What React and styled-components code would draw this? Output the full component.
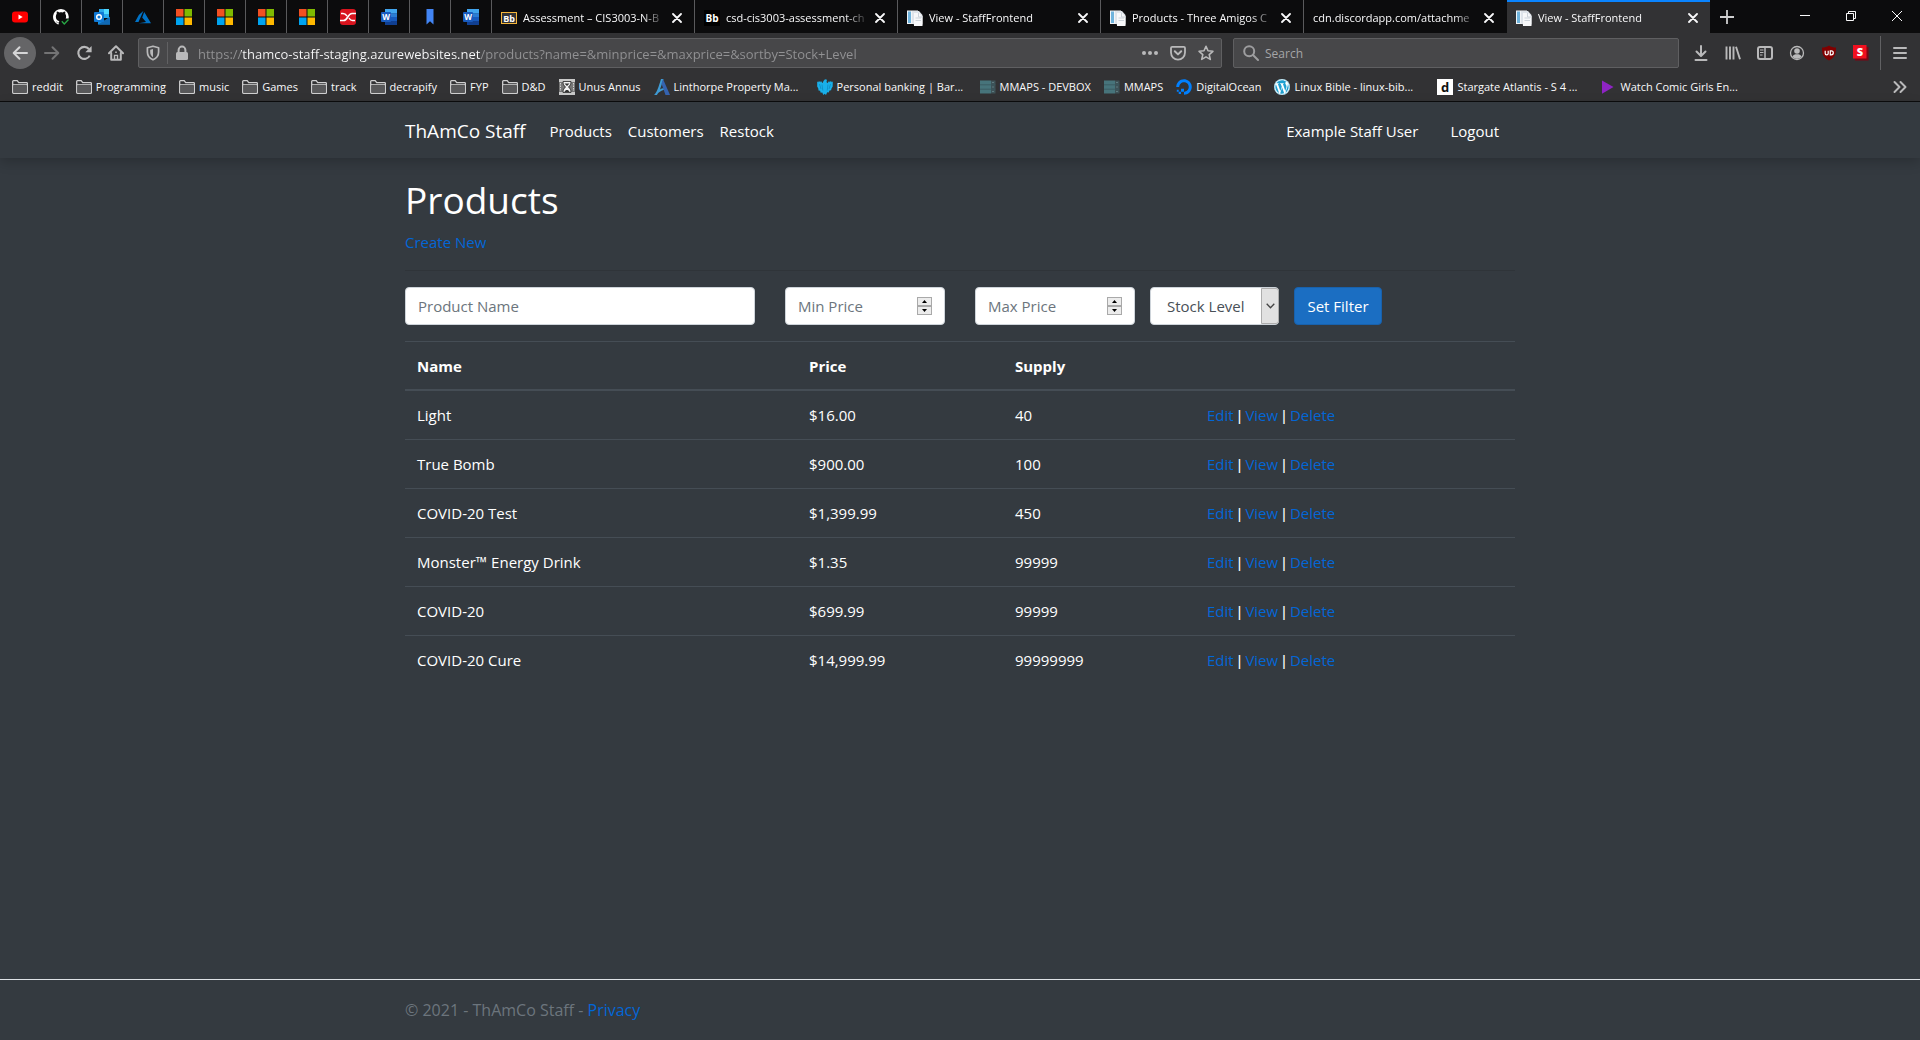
import React from "react";
import styled, { createGlobalStyle, css } from "styled-components";
import { FaWordpress, FaDigitalOcean } from "react-icons/fa";

const UI_FONT = `"Segoe UI", "Open Sans", "Noto Sans", sans-serif`;

const GlobalStyle = createGlobalStyle`
  *, *::before, *::after { box-sizing: border-box; }
  body {
    margin: 0;
    background: #343a40;
    color: #fff;
    font-family: ${UI_FONT};
    font-size: 15px;
    line-height: 24px;
  }
  button, input, select { font: inherit; color: inherit; margin: 0; }
  a { text-decoration: none; }
`;

/* ---------- browser icons ---------- */

const Svg = styled.svg`
  display: block;
  flex: none;
  width: ${(p) => p.$w || 16}px;
  height: ${(p) => p.$h || 16}px;
`;
const Icon = ({ children, w, h, box = "0 0 16 16", ...rest }) => (
  <Svg viewBox={box} $w={w} $h={h} fill="none" aria-hidden="true" {...rest}>
    {children}
  </Svg>
);
const line = { stroke: "currentColor", strokeWidth: 2, strokeLinecap: "round", strokeLinejoin: "round" };
const glyph = { fontFamily: "Open Sans, sans-serif", fontWeight: 700, textAnchor: "middle" };

const BackIcon = () => (
  <Icon><path d="M15 8H2M7.5 2.2 1.7 8l5.8 5.8" {...line} /></Icon>
);
const ForwardIcon = () => (
  <Icon><path d="M1 8h13M8.5 2.2 14.3 8l-5.8 5.8" {...line} /></Icon>
);
const ReloadIcon = () => (
  <Icon>
    <path d="M13.7 10.6A6 6 0 1 1 12.900 4" {...line} strokeWidth="2.1" strokeLinecap="butt" />
    <path d="M15.600 1v6.300H9.300z" fill="currentColor" />
  </Icon>
);
const HomeIcon = () => (
  <Icon>
    <path d="M1 8.2 8 1.3l7 6.9" {...line} />
    <path d="M3.2 8v6.8h9.6V8" {...line} />
    <path d="M6.5 15v-4.6h3V15" stroke="currentColor" strokeWidth="1.4" />
    <path d="M7.2 6.4h1.6v1.6H7.2z" fill="currentColor" />
  </Icon>
);
const ShieldIcon = () => (
  <Icon>
    <path d="M8 1.2 13.6 2.7V7c0 4-2.3 6.4-5.6 7.8C4.7 13.4 2.4 11 2.4 7V2.7z" stroke="currentColor" strokeWidth="1.7" strokeLinejoin="round" />
    <path d="M8 4v8.2C6.200 11 5.200 9.500 5.200 7V4.700z" fill="currentColor" />
  </Icon>
);
const LockIcon = () => (
  <Icon>
    <rect x="2" y="7" width="12" height="8" rx="1.5" fill="currentColor" />
    <path d="M4.600 7.500V5a3.400 3.400 0 0 1 6.800 0v2.500" stroke="currentColor" strokeWidth="2" />
  </Icon>
);
const DotsIcon = () => (
  <Icon>
    <circle cx="2" cy="8" r="2" fill="currentColor" />
    <circle cx="8" cy="8" r="2" fill="currentColor" />
    <circle cx="14" cy="8" r="2" fill="currentColor" />
  </Icon>
);
const PocketIcon = () => (
  <Icon>
    <path d="M2.200 1.800h11.600c.7 0 1.200.5 1.200 1.200v4.600a7 7 0 0 1-14 0V3c0-.7.5-1.200 1.200-1.200z" stroke="currentColor" strokeWidth="1.800" />
    <path d="M4.800 6.300 8 9.400l3.200-3.100" {...line} />
  </Icon>
);
const StarIcon = () => (
  <Icon>
    <path d="m8 1.300 2 4.500 4.900.5-3.700 3.300 1.100 4.800L8 11.900l-4.300 2.500 1.100-4.800L1.100 6.300 6 5.800z" stroke="currentColor" strokeWidth="1.600" strokeLinejoin="round" />
  </Icon>
);
const SearchIcon = () => (
  <Icon>
    <circle cx="6.200" cy="6.200" r="5" stroke="currentColor" strokeWidth="2" />
    <path d="m10 10 5 5" {...line} />
  </Icon>
);
const DownloadIcon = () => (
  <Icon><path d="M8 1v9.500M3.500 6.500 8 11l4.500-4.500M2.500 15h11" {...line} /></Icon>
);
const LibraryIcon = () => (
  <Icon>
    <path d="M1.500 1.500v13M5 1.500v13M8.500 1.500v13M11 1.800l4 12.400" stroke="currentColor" strokeWidth="1.900" />
  </Icon>
);
const SidebarIcon = () => (
  <Icon>
    <rect x="1" y="2" width="14" height="12" rx="2" stroke="currentColor" strokeWidth="2" />
    <path d="M8 2v12" stroke="currentColor" strokeWidth="1.500" />
    <path d="M3 5h3.500M3 7.500h3.500M3 10h2.500" stroke="currentColor" />
  </Icon>
);
const AccountIcon = () => (
  <Icon>
    <circle cx="8" cy="8" r="6.500" stroke="currentColor" strokeWidth="1.300" />
    <circle cx="8" cy="6" r="2.800" fill="currentColor" />
    <path d="M3.300 11.500c1-1.900 2.500-2.300 4.700-2.300s3.700.4 4.700 2.300A5.600 5.600 0 0 1 8 13.700a5.600 5.600 0 0 1-4.700-2.200z" fill="currentColor" />
  </Icon>
);
const UblockIcon = () => (
  <Icon>
    <path d="M8 .5C10 2 12.500 2.500 15 2.500c0 6.500-.7 9.500-7 13C1.700 12 1 9 1 2.500 3.500 2.500 6 2 8 .5z" fill="#800000" />
    <path d="M4.200 5.800v2.700c0 1 .5 1.300 1.500 1.300s1.500-.3 1.500-1.300V5.800" stroke="#fff" strokeWidth="1.200" />
    <path d="M9.300 5.900h1c1.500 0 2 .7 2 1.900s-.5 2-2 2h-1z" stroke="#fff" strokeWidth="1.200" />
  </Icon>
);
const StylishIcon = () => (
  <Icon>
    <path d="M2 2h13.500v13.500H2z" fill="#7c0512" />
    <path d="M0 0h13.500v13.500H0z" fill="#f0101f" />
    <text x="7" y="11" fontSize="11" fill="#fff" {...glyph} fontWeight="800">S</text>
  </Icon>
);
const MenuIcon = () => (
  <Icon><path d="M2 3h12M2 8h12M2 13h12" {...line} /></Icon>
);
const CloseIcon = () => (
  <Icon w={10} h={10} box="0 0 10 10">
    <path d="m1 1 8 8M9 1 1 9" {...line} strokeWidth="1.800" />
  </Icon>
);
const PlusIcon = () => (
  <Icon w={14} h={14} box="0 0 14 14"><path d="M7 0v14M0 7h14" stroke="currentColor" strokeWidth="1.800" /></Icon>
);
const MinimiseIcon = () => (
  <Icon w={10} h={10} box="0 0 10 10"><path d="M0 4.500h10" stroke="currentColor" /></Icon>
);
const RestoreIcon = () => (
  <Icon w={10} h={10} box="0 0 10 10">
    <path d="M.5 2.500h7v7h-7zM2.500 2.500v-2h7v7h-2" stroke="currentColor" />
  </Icon>
);
const WindowCloseIcon = () => (
  <Icon w={10} h={10} box="0 0 10 10"><path d="m0 0 10 10M10 0 0 10" stroke="currentColor" /></Icon>
);
const OverflowIcon = () => (
  <Icon><path d="m2.500 3 5 5-5 5M8.500 3l5 5-5 5" {...line} /></Icon>
);
const FolderIcon = () => (
  <Icon>
    <path d="M.7 13.500v-11c0-.5.3-.8.800-.8h3.700l1.500 2h8c.4 0 .7.300.7.700v9.100c0 .5-.3.800-.8.800H1.500c-.5 0-.8-.3-.8-.8z" stroke="#cfcfd0" strokeWidth="1.300" />
    <path d="M1 5.700h14" stroke="#cfcfd0" />
    <path d="M1.500 6.300h13v7.300h-13z" fill="#58585a" />
  </Icon>
);

/* ---------- site icons ---------- */

const YouTube = () => (
  <Icon>
    <rect x="0" y="2.500" width="16" height="11" rx="3" fill="#f00" />
    <path d="M6.500 5.500v5L10.700 8z" fill="#fff" />
  </Icon>
);
const GitHub = () => (
  <Icon>
    <path d="M8 0a8 8 0 0 0-3 15.400c.5.100.700-.2.700-.5v-1.500c-2.200.5-2.700-1-2.700-1 1.200.2 1.600 1.300 2.900.8.100-.5.300-.8.500-1C3.500 11.600 2.700 9.500 2.900 7c.1-1 .4-1.600.9-2.200-.2-.7-.2-1.500.1-2.300.9 0 1.700.5 2.300.9 1.200-.3 2.500-.3 3.600 0 .6-.4 1.400-.9 2.300-.9.300.8.300 1.600.1 2.300.6.700.9 1.500.9 2.500 0 .8-.1 1.500-.4 2.200h2.900A8 8 0 0 0 8 0z" fill="#fff" />
    <path d="m8.800 12.300 2.500 2.700 4.200-4.500" stroke="#28a745" strokeWidth="1.300" />
  </Icon>
);
const Outlook = () => (
  <Icon>
    <path d="M5 0h10v9H5z" fill="#28a8ea" />
    <path d="M10 0h5v5h-5z" fill="#50d9ff" />
    <path d="M5 5h5v5H5z" fill="#0364b8" />
    <path d="M4 8.500 10 12l6-4v7.500H4z" fill="#1490df" />
    <path d="M4 15.500 16 8v7.500z" fill="#1069b5" />
    <rect x="0" y="3" width="10" height="10" rx="1" fill="#0f78d4" />
    <circle cx="5" cy="8" r="2.300" stroke="#fff" strokeWidth="1.500" />
  </Icon>
);
const Azure = () => (
  <Icon>
    <path d="M8.500 1.800 3.800 5.900 0 13h3.500z" fill="#0072c6" />
    <path d="m9.200 2.900-2 5.500 3.800 4.700-7.300 1.200H16z" fill="#0072c6" />
  </Icon>
);
const Microsoft = () => (
  <Icon>
    <path d="M0 0h7.500v7.500H0z" fill="#f25022" />
    <path d="M8.500 0H16v7.500H8.500z" fill="#7fba00" />
    <path d="M0 8.500h7.500V16H0z" fill="#00a4ef" />
    <path d="M8.500 8.500H16V16H8.500z" fill="#ffb900" />
  </Icon>
);
const RedWave = () => (
  <Icon>
    <rect width="16" height="16" rx="3" fill="#d9141e" />
    <path d="M0 11.500h3.500C8 11.500 7.500 4.500 12 4.500h4" stroke="#fff" strokeWidth="1.600" />
    <path d="M1 4.500h2c2 0 3 1 4 2.500M9 9c1 1.500 1.500 2.500 3.500 2.500H15" stroke="#fff" strokeWidth="1.400" />
  </Icon>
);
const Word = () => (
  <Icon>
    <path d="M4 0h12v4.500H4z" fill="#41a5ee" />
    <path d="M4 4.200h12V8H4z" fill="#2b7cd3" />
    <path d="M4 8h12v4H4z" fill="#185abd" />
    <path d="M4 12h12v4H4z" fill="#103f91" />
    <rect x="0" y="3" width="10" height="10" rx="1" fill="#185abd" />
    <text x="5" y="11" fontSize="8" fill="#fff" {...glyph}>W</text>
  </Icon>
);
const Bookmark = () => (
  <Icon><path d="M4.500 0h7v15.500L8 12.300l-3.500 3.200z" fill="#4285f4" /></Icon>
);
const BlackboardGold = () => (
  <Icon>
    <rect x=".5" y="2.500" width="15" height="11" fill="#333" stroke="#f5b63a" />
    <text x="8" y="11.500" fontSize="9" fill="#fff" {...glyph}>Bb</text>
  </Icon>
);
const Blackboard = () => (
  <Icon>
    <path d="M0 0h16v16H0z" fill="#000" />
    <text x="8" y="12" fontSize="10" fill="#fff" {...glyph}>Bb</text>
  </Icon>
);
const Documents = () => (
  <Icon>
    <path d="M0 .5h11V14H0z" fill="#f2f5f8" />
    <path d="M1 1.500h3v11.500H1z" fill="#6fb3dc" />
    <path d="M5 1h7l3.500 4v9.500H7L5 13z" fill="#dfe4ea" />
    <path d="M7 3h5l3.500 3.500V16H7z" fill="#f7f8fa" />
    <path d="M8.500 8H14M8.500 10.500H14M11.500 3v4h4" stroke="#ccd3da" />
  </Icon>
);
const Hourglass = () => (
  <Icon>
    <path d="M0 0h16v3H0zM0 13h16v3H0z" fill="#c9c9c9" />
    <path d="M0 3h4l2 5-2 5H0zM16 3h-4l-2 5 2 5h4z" fill="#777" />
    <path d="M1.500 4v8M14.500 4v8" stroke="#d5d5d5" strokeDasharray="1.500 1" />
    <path d="M4 2.500h8c0 3-1 4-2.500 5.500C11 9.500 12 10.500 12 13.500H4C4 10.500 5 9.500 6.500 8 5 6.500 4 5.500 4 2.500z" fill="#f2f2f2" stroke="#222" strokeWidth=".8" />
    <path d="M5.500 4.500h5L8 7zM5.500 13c.5-1.500 1.500-2 2.500-2s2 .5 2.500 2z" fill="#333" />
  </Icon>
);
const Linthorpe = () => (
  <Icon>
    <path d="M0 16C3 13.500 4.500 8 7 0h2.500L6 10.500c2-1.300 4-1.500 5.500-.5C8 11.500 4 13 3 16z" fill="#3f9bd4" />
    <path d="M9 0 16 16h-4.500L7.500 4.500z" fill="#3563b0" />
  </Icon>
);
const Eagle = () => (
  <Icon>
    <path d="M6.500 2 8 .3l2 .5L9.500 3l1 1.200L12 2l.8 1.200L14 1.700l.6 1.600 1.200-.8-.1 5-1.200 2-.4 1.800-1.600.2-.8 2-1.500-.2L9 16l-1.300-1.300L6.300 16l-1-2.500-1.600.2-.6-2-1.600-.3-.2-1.900L.2 7.500l0-5 1.200.8.500-1.600 1.200 1.500L4 2l1.500 2.200z" fill="#19b0ea" />
    <path d="m2.500 5 1.500 5M5 5.500l.8 6M13.500 5 12 10M11 5.500l-.8 6" stroke="#0b84bb" strokeWidth=".7" />
  </Icon>
);
const ServerRack = () => (
  <Icon>
    <path d="M0 1.500h11v13H0z" fill="#47747b" />
    <path d="M11 1.500h4.500v13H11z" fill="#3e5257" />
    <path d="M0 5.800h15.500M0 10.200h15.500" stroke="#39575d" strokeWidth=".8" />
    <path d="M12.500 3.500h1M12.500 8h1M12.500 12.500h1" stroke="#7fa5ab" />
  </Icon>
);
const DailyD = () => (
  <Icon>
    <path d="M0 0h16v16H0z" fill="#fff" />
    <text x="8" y="13" fontSize="13" fill="#111" {...glyph}>d</text>
  </Icon>
);
const PlayTriangle = () => (
  <Icon><path d="M2 1.500 13.500 8 2 14.700z" fill="#8e24c4" /></Icon>
);
const BrandGlyph = styled.span`
  display: flex;
  flex: none;
  border-radius: 50%;
  color: ${(p) => p.$color};
  background: ${(p) => p.$bg || "transparent"};
`;
const Ocean = () => <BrandGlyph $color="#0080ff"><FaDigitalOcean size={16} /></BrandGlyph>;
const WordPress = () => <BrandGlyph $color="#1e9fd0" $bg="#fff"><FaWordpress size={16} /></BrandGlyph>;

/* ---------- browser chrome ---------- */

const BareButton = styled.button`
  display: flex;
  align-items: center;
  justify-content: center;
  padding: 0;
  border: 0;
  background: none;
`;

const Browser = styled.header`
  background: #323234;
  color: #f9f9fa;
  font-size: 11px;
  line-height: 16px;
  border-bottom: 1px solid #0c0c0d;
`;

const TabStrip = styled.div`
  display: flex;
  height: 33px;
  background: #0c0c0d;
`;

const PinnedTab = styled(BareButton)`
  flex: 0 0 41px;
  border-right: 1px solid #5a5a5c;
`;

const Tab = styled.div`
  display: flex;
  align-items: center;
  gap: 6px;
  flex: 0 1 203px;
  min-width: 0;
  padding: 2px 12px 0 9px;
  border-right: 1px solid ${(p) => (p.$last ? "transparent" : "#5a5a5c")};
  ${(p) => p.$active && css`
    background: #323234;
    border-right: 0;
    box-shadow: inset 0 2px #0a84ff;
  `}
`;

const TabTitle = styled(BareButton)`
  flex: 1;
  min-width: 0;
  justify-content: flex-start;
  white-space: nowrap;
  mask-image: linear-gradient(to left, transparent, #000 24px);
`;

const NewTab = styled(BareButton)`
  width: 34px;
  color: #cfcfd0;
`;

const WindowControls = styled.div`
  display: flex;
  margin-left: auto;
`;

const WindowButton = styled(BareButton)`
  width: 46px;
  height: 31px;
`;

const Toolbar = styled.div`
  display: flex;
  align-items: center;
  height: 40px;
  padding: 0 4px;
  color: #b9b9ba;
`;

const ToolButton = styled(BareButton)`
  flex: none;
  width: 32px;
  height: 32px;
  color: ${(p) => (p.$faded ? "#737374" : "inherit")};
`;

const BackButton = styled(ToolButton)`
  border-radius: 50%;
  background: #656567;
  color: #d6d6d7;
`;

const Field = styled.label`
  display: flex;
  align-items: center;
  height: 30px;
  border: 1px solid #5f5f61;
  border-radius: 2px;
  background: #474749;
  min-width: 0;
`;

const UrlBar = styled(Field)`
  flex: 1 1 1084px;
  margin-left: 6px;
  padding: 0 1px 0 6px;
`;

const SearchBar = styled(Field)`
  flex: 0 1 446px;
  margin: 0 6px 0 11px;
  padding-left: 9px;
  gap: 6px;
  color: #9d9d9f;
`;

const UrlInput = styled.input`
  flex: 1;
  min-width: 0;
  margin-left: 8px;
  padding: 2px 0 0;
  border: 0;
  outline: 0;
  font-size: 13px;
  line-height: 24px;
  color: #f9f9fa;
  background: linear-gradient(to right, #929294 43px, #f9f9fa 43px, #f9f9fa 283px, #929294 283px);
  background-clip: text;
  -webkit-text-fill-color: transparent;
`;

const SearchInput = styled.input`
  flex: 1;
  min-width: 0;
  padding: 2px 0 0;
  border: 0;
  outline: 0;
  background: none;
  font-size: 12px;
  line-height: 24px;
  &::placeholder { color: #a5a5a7; opacity: 1; }
`;

const Divider = styled.span`
  flex: none;
  width: 1px;
  height: ${(p) => p.$h}px;
  margin: 0 ${(p) => p.$gap}px;
  background: #616163;
`;

const UrlAction = styled(BareButton)`
  flex: none;
  width: 28px;
  height: 28px;
`;

const BookmarkBar = styled.nav`
  display: flex;
  align-items: center;
  gap: 13px;
  height: 28px;
  padding: 0 12px;
`;

const BookmarkLink = styled.a`
  display: flex;
  align-items: center;
  gap: 4px;
  flex: none;
  width: ${(p) => (p.$capped ? "150px" : "auto")};
  color: inherit;
  white-space: nowrap;
`;

const Overflow = styled(BareButton)`
  margin-left: auto;
  color: #b9b9ba;
`;

const pinned = [
  ["YouTube", YouTube], ["GitHub", GitHub], ["Outlook", Outlook], ["Azure", Azure],
  ["Microsoft", Microsoft], ["Microsoft", Microsoft], ["Microsoft", Microsoft], ["Microsoft", Microsoft],
  ["Wave", RedWave], ["Word", Word], ["Bookmark", Bookmark], ["Word", Word],
];

const tabs = [
  { title: "Assessment – CIS3003-N-B", Mark: BlackboardGold },
  { title: "csd-cis3003-assessment-ch", Mark: Blackboard },
  { title: "View - StaffFrontend", Mark: Documents },
  { title: "Products - Three Amigos C", Mark: Documents },
  { title: "cdn.discordapp.com/attachme" },
  { title: "View - StaffFrontend", Mark: Documents, active: true },
];

const bookmarks = [
  ["reddit", FolderIcon], ["Programming", FolderIcon], ["music", FolderIcon], ["Games", FolderIcon],
  ["track", FolderIcon], ["decrapify", FolderIcon], ["FYP", FolderIcon], ["D&D", FolderIcon],
  ["Unus Annus", Hourglass], ["Linthorpe Property Ma...", Linthorpe], ["Personal banking | Bar...", Eagle],
  ["MMAPS - DEVBOX", ServerRack], ["MMAPS", ServerRack], ["DigitalOcean", Ocean],
  ["Linux Bible - linux-bib...", WordPress], ["Stargate Atlantis - S 4 ...", DailyD],
  ["Watch Comic Girls En...", PlayTriangle],
];

function BrowserChrome() {
  return (
    <Browser>
      <TabStrip>
        {pinned.map(([name, Mark], i) => (
          <PinnedTab key={i} aria-label={name}><Mark /></PinnedTab>
        ))}
        {tabs.map(({ title, Mark, active }, i) => (
          <Tab key={i} $active={active} $last={i === tabs.length - 2}>
            {Mark && <Mark />}
            <TabTitle>{title}</TabTitle>
            <BareButton aria-label="Close tab"><CloseIcon /></BareButton>
          </Tab>
        ))}
        <NewTab aria-label="New tab"><PlusIcon /></NewTab>
        <WindowControls>
          <WindowButton aria-label="Minimise"><MinimiseIcon /></WindowButton>
          <WindowButton aria-label="Restore"><RestoreIcon /></WindowButton>
          <WindowButton aria-label="Close"><WindowCloseIcon /></WindowButton>
        </WindowControls>
      </TabStrip>
      <Toolbar>
        <BackButton aria-label="Back"><BackIcon /></BackButton>
        <ToolButton aria-label="Forward" $faded><ForwardIcon /></ToolButton>
        <ToolButton aria-label="Reload"><ReloadIcon /></ToolButton>
        <ToolButton aria-label="Home"><HomeIcon /></ToolButton>
        <UrlBar>
          <ShieldIcon />
          <Divider $h={22} $gap={6} />
          <LockIcon />
          <UrlInput
            aria-label="Address"
            defaultValue="https://thamco-staff-staging.azurewebsites.net/products?name=&minprice=&maxprice=&sortby=Stock+Level"
          />
          <UrlAction aria-label="Page actions"><DotsIcon /></UrlAction>
          <UrlAction aria-label="Save to Pocket"><PocketIcon /></UrlAction>
          <UrlAction aria-label="Bookmark page"><StarIcon /></UrlAction>
        </UrlBar>
        <SearchBar>
          <SearchIcon />
          <SearchInput aria-label="Search" placeholder="Search" />
        </SearchBar>
        <ToolButton aria-label="Downloads"><DownloadIcon /></ToolButton>
        <ToolButton aria-label="Library"><LibraryIcon /></ToolButton>
        <ToolButton aria-label="Sidebars"><SidebarIcon /></ToolButton>
        <ToolButton aria-label="Account"><AccountIcon /></ToolButton>
        <ToolButton aria-label="Blocker"><UblockIcon /></ToolButton>
        <ToolButton aria-label="Styles"><StylishIcon /></ToolButton>
        <Divider $h={34} $gap={3} />
        <ToolButton aria-label="Menu"><MenuIcon /></ToolButton>
      </Toolbar>
      <BookmarkBar>
        {bookmarks.map(([name, Mark]) => (
          <BookmarkLink key={name} href="#" $capped={name.endsWith("...")}><Mark />{name}</BookmarkLink>
        ))}
        <Overflow aria-label="More bookmarks"><OverflowIcon /></Overflow>
      </BookmarkBar>
    </Browser>
  );
}

/* ---------- page ---------- */

const Shell = styled.div`
  display: flex;
  flex-direction: column;
  min-height: 100vh;
`;

const Container = styled.div`
  width: 100%;
  max-width: 1140px;
  margin: 0 auto;
  padding: 0 15px;
`;

const SiteNav = styled.nav`
  padding: 8px 0;
  box-shadow: 0 4px 12px rgba(0, 0, 0, 0.2);
`;

const NavRow = styled(Container)`
  display: flex;
  align-items: center;
  height: 40px;
`;

const Brand = styled.a`
  margin-right: 16px;
  padding-top: 2px;
  font-size: 19px;
  line-height: 32px;
  color: #fff;
`;

const NavLink = styled.a`
  padding: 9px 8px 7px;
  color: #fff;
`;

const UserLinks = styled.div`
  display: flex;
  align-items: center;
  gap: 8px;
  margin-left: auto;
`;

const LogoutButton = styled.button`
  padding: 9px 16px 7px;
  border: 0;
  background: none;
`;

const Main = styled(Container).attrs({ as: "main" })`
  flex: 1;
  padding-top: 16px;
  padding-bottom: 16px;
`;

const Title = styled.h1`
  margin: 0 0 4px;
  font-size: 37px;
  font-weight: 400;
  line-height: 52px;
`;

const Link = styled.a`
  color: #0366d6;
`;

const Intro = styled.p`
  margin: 0;
  padding-bottom: 16px;
  border-bottom: 1px solid #2f3439;
`;

const FilterForm = styled.form`
  display: flex;
  gap: 15px;
  padding: 16px 0;
`;

const control = css`
  width: 100%;
  height: 38px;
  padding: 6px 12px;
  border: 1px solid #ced4da;
  border-radius: 4px;
  background: #fff;
  color: #495057;
`;

const FieldBox = styled.div`
  position: relative;
  width: ${(p) => p.$w}px;
  margin-right: ${(p) => (p.$wide ? 15 : 0)}px;
`;

const TextInput = styled.input`
  ${control}
  appearance: textfield;
  &::-webkit-inner-spin-button { display: none; }
  &::placeholder { color: #6c757d; opacity: 1; }
`;

const Spinner = styled.span`
  position: absolute;
  top: 10px;
  right: 13px;
  display: flex;
  flex-direction: column;
  width: 15px;
`;

const SpinButton = styled(BareButton)`
  height: 9px;
  border: 1px solid #a9a9a9;
  background: #ececec;
  color: #000;
`;

const Select = styled.select`
  ${control}
  appearance: none;
  padding: 6px 16px;
`;

const SelectArrow = styled.span`
  position: absolute;
  top: 1px;
  right: 0;
  bottom: 1px;
  display: flex;
  align-items: center;
  justify-content: center;
  width: 18px;
  border: 1px solid #adadad;
  border-radius: 0 3px 3px 0;
  background: #e1e1e1;
  color: #444;
  pointer-events: none;
`;

const SubmitButton = styled.button`
  width: 88px;
  height: 38px;
  padding: 0;
  border: 1px solid #1861ac;
  border-radius: 4px;
  background: #1b6ec2;
  color: #fff;
`;

const Table = styled.table`
  width: 100%;
  table-layout: fixed;
  border-spacing: 0;
  text-align: left;
`;

const Col = styled.col`
  width: ${(p) => p.$w}px;
`;

const HeadCell = styled.th`
  padding: 12px 12px 11px;
  border-top: 1px solid #454d55;
  border-bottom: 2px solid #454d55;
  font-weight: 700;
`;

const Cell = styled.td`
  padding: 12px;
  border-bottom: 1px solid #454d55;
  tr:last-child > & { border-bottom: 0; }
`;

const Pipe = styled.span`
  font-family: "Liberation Sans", Arial, sans-serif;
  line-height: 16px;
`;

const Footer = styled.footer`
  border-top: 1px solid #dee2e6;
  font-size: 16px;
  line-height: 60px;
  color: #6c757d;
`;

const products = [
  ["Light", "$16.00", "40"],
  ["True Bomb", "$900.00", "100"],
  ["COVID-20 Test", "$1,399.99", "450"],
  ["Monster™ Energy Drink", "$1.35", "99999"],
  ["COVID-20", "$699.99", "99999"],
  ["COVID-20 Cure", "$14,999.99", "99999999"],
];

function PriceField({ label }) {
  return (
    <FieldBox $w={160} $wide={label === "Min Price"}>
      <TextInput type="number" aria-label={label} placeholder={label} />
      <Spinner>
        <SpinButton type="button" aria-label={`Raise ${label}`}>
          <Icon w={5} h={3} box="0 0 5 3"><path d="M0 3 2.500 0 5 3z" fill="currentColor" /></Icon>
        </SpinButton>
        <SpinButton type="button" aria-label={`Lower ${label}`}>
          <Icon w={5} h={3} box="0 0 5 3"><path d="M0 0h5L2.500 3z" fill="currentColor" /></Icon>
        </SpinButton>
      </Spinner>
    </FieldBox>
  );
}

export default function App() {
  return (
    <Shell>
      <GlobalStyle />
      <BrowserChrome />
      <SiteNav>
        <NavRow>
          <Brand href="#">ThAmCo Staff</Brand>
          <NavLink href="#">Products</NavLink>
          <NavLink href="#">Customers</NavLink>
          <NavLink href="#">Restock</NavLink>
          <UserLinks>
            <NavLink href="#">Example Staff User</NavLink>
            <LogoutButton>Logout</LogoutButton>
          </UserLinks>
        </NavRow>
      </SiteNav>
      <Main>
        <Title>Products</Title>
        <Intro><Link href="#">Create New</Link></Intro>
        <FilterForm onSubmit={(e) => e.preventDefault()}>
          <FieldBox $w={350} $wide>
            <TextInput aria-label="Product Name" placeholder="Product Name" />
          </FieldBox>
          <PriceField label="Min Price" />
          <PriceField label="Max Price" />
          <FieldBox $w={129}>
            <Select aria-label="Sort by" defaultValue="Stock Level">
              <option>Stock Level</option>
              <option>Name</option>
              <option>Price</option>
            </Select>
            <SelectArrow>
              <Icon w={9} h={6} box="0 0 9 6"><path d="m.7.700 3.800 4L8.300.7" stroke="currentColor" strokeWidth="1.300" /></Icon>
            </SelectArrow>
          </FieldBox>
          <SubmitButton type="submit">Set Filter</SubmitButton>
        </FilterForm>
        <Table>
          <colgroup>
            <Col $w={392} />
            <Col $w={206} />
            <Col $w={192} />
            <col />
          </colgroup>
          <thead>
            <tr>
              <HeadCell scope="col">Name</HeadCell>
              <HeadCell scope="col">Price</HeadCell>
              <HeadCell scope="col">Supply</HeadCell>
              <HeadCell aria-label="Actions" />
            </tr>
          </thead>
          <tbody>
            {products.map(([name, price, supply]) => (
              <tr key={name}>
                <Cell>{name}</Cell>
                <Cell>{price}</Cell>
                <Cell>{supply}</Cell>
                <Cell>
                  <Link href="#">Edit</Link> <Pipe>|</Pipe> <Link href="#">View</Link> <Pipe>|</Pipe> <Link href="#">Delete</Link>
                </Cell>
              </tr>
            ))}
          </tbody>
        </Table>
      </Main>
      <Footer>
        <Container>
          © 2021 - ThAmCo Staff - <Link href="#">Privacy</Link>
        </Container>
      </Footer>
    </Shell>
  );
}
